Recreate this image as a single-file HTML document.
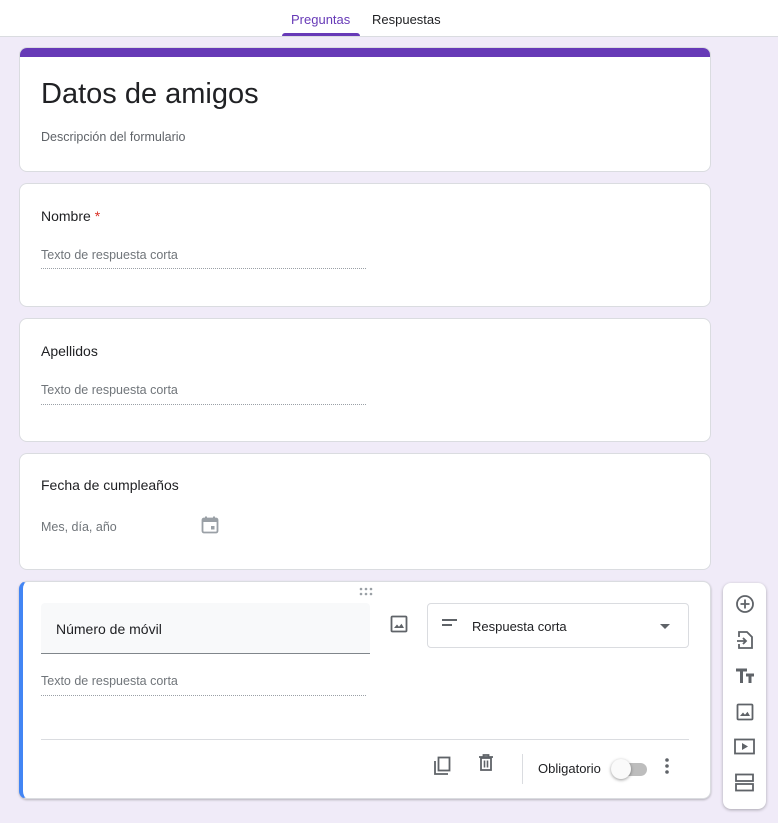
<!DOCTYPE html>
<html><head><meta charset="utf-8">
<style>
*{box-sizing:border-box;margin:0;padding:0}
body{width:778px;height:823px;overflow:hidden;background:#f0ebf8;font-family:"Liberation Sans",Arial,sans-serif;position:relative;color:#202124}
.abs{position:absolute}
.hdr{left:0;top:0;width:778px;height:37px;background:#fff;border-bottom:1px solid #dadce0}
.card{position:absolute;left:19px;width:692px;background:#fff;border:1px solid #dadce0;border-radius:8px}
.t{position:absolute;white-space:nowrap}
.ph{font-size:12.5px;color:#70757a}
.dot{position:absolute;height:0;border-bottom:1px dotted #9aa0a6}
svg{position:absolute}
</style></head><body>
<div class="abs hdr">
 <div class="t" style="left:291px;top:12px;font-size:13px;color:#673ab7">Preguntas</div>
 <div class="t" style="left:372px;top:12px;font-size:13px;color:#202124">Respuestas</div>
 <div class="abs" style="left:282px;top:33px;width:78px;height:3px;background:#673ab7;border-radius:3px 3px 0 0"></div>
</div>

<div class="card" style="top:47px;height:125px;overflow:hidden">
 <div class="abs" style="left:-1px;top:-1px;width:694px;height:10px;background:#673ab7"></div>
 <div class="t" style="left:21px;top:30px;font-size:29px;color:#202124">Datos de amigos</div>
 <div class="t" style="left:21px;top:82px;font-size:12.5px;color:#5f6368">Descripción del formulario</div>
</div>

<div class="card" style="top:183px;height:124px">
 <div class="t" style="left:21px;top:24px;font-size:14px">Nombre <span style="color:#d93025">*</span></div>
 <div class="t ph" style="left:21px;top:64px">Texto de respuesta corta</div>
 <div class="dot" style="left:21px;top:84px;width:325px"></div>
</div>

<div class="card" style="top:318px;height:124px">
 <div class="t" style="left:21px;top:24px;font-size:14px">Apellidos</div>
 <div class="t ph" style="left:21px;top:64px">Texto de respuesta corta</div>
 <div class="dot" style="left:21px;top:85px;width:325px"></div>
</div>

<div class="card" style="top:453px;height:117px">
 <div class="t" style="left:21px;top:23px;font-size:14px">Fecha de cumpleaños</div>
 <div class="t ph" style="left:21px;top:66px">Mes, día, año</div>
 <svg style="left:181px;top:62px" width="18" height="18" viewBox="0 0 18 18"><rect x="1.5" y="2.5" width="15" height="14" rx="1.5" fill="none" stroke="#9aa0a6" stroke-width="1.8"/><rect x="1.5" y="2.5" width="15" height="3.5" fill="#9aa0a6"/><rect x="4" y="0.5" width="2" height="3" fill="#9aa0a6"/><rect x="12" y="0.5" width="2" height="3" fill="#9aa0a6"/><rect x="10" y="10" width="3.5" height="3.5" fill="#9aa0a6"/></svg>
</div>

<div class="card" style="top:581px;height:218px;border-left:4px solid #4285f4;box-shadow:0 1px 2px rgba(0,0,0,.25)">
 <svg style="left:335px;top:5px" width="16" height="10"><g fill="#9aa0a6"><circle cx="3" cy="2" r="1.3"/><circle cx="8" cy="2" r="1.3"/><circle cx="13" cy="2" r="1.3"/><circle cx="3" cy="7" r="1.3"/><circle cx="8" cy="7" r="1.3"/><circle cx="13" cy="7" r="1.3"/></g></svg>
 <div class="abs" style="left:18px;top:21px;width:329px;height:51px;background:#f8f9fa;border-bottom:1px solid #80868b;border-radius:4px 4px 0 0"></div>
 <div class="t" style="left:33px;top:39px;font-size:14px">Número de móvil</div>
 <svg style="left:367px;top:33px" width="18" height="18" viewBox="0 0 18 18"><rect x="1.5" y="1.5" width="15" height="15" rx="1" fill="none" stroke="#5f6368" stroke-width="1.8"/><path d="M4 13l3-3.5 2 2.3 2.5-3 2.5 4.2z" fill="#5f6368"/></svg>
 <div class="abs" style="left:404px;top:21px;width:262px;height:45px;border:1px solid #dadce0;border-radius:4px"></div>
 <svg style="left:419px;top:37px" width="16" height="8"><rect x="0" y="0" width="15" height="2" fill="#5f6368"/><rect x="0" y="5" width="10" height="2" fill="#5f6368"/></svg>
 <div class="t" style="left:449px;top:37px;font-size:13px">Respuesta corta</div>
 <svg style="left:637px;top:42px" width="10" height="5"><path d="M0 0h10L5 5z" fill="#5f6368"/></svg>
 <div class="t ph" style="left:18px;top:92px">Texto de respuesta corta</div>
 <div class="dot" style="left:18px;top:113px;width:325px"></div>
 <div class="abs" style="left:18px;top:157px;width:648px;height:1px;background:#dadce0"></div>
 <svg style="left:409px;top:173px" width="22" height="22" viewBox="0 0 22 22"><path d="M3 6v13h13" fill="none" stroke="#5f6368" stroke-width="1.8"/><rect x="6.5" y="2.5" width="11" height="13" fill="none" stroke="#5f6368" stroke-width="1.8"/></svg>
 <svg style="left:455px;top:172px" width="16" height="18" viewBox="0 0 16 18"><path d="M1 3h14M5.5 3V1h5v2" fill="none" stroke="#5f6368" stroke-width="1.8"/><rect x="3" y="4" width="10" height="12" fill="none" stroke="#5f6368" stroke-width="1.8"/><path d="M6.5 6.5v7M9.5 6.5v7" stroke="#5f6368" stroke-width="1.6"/></svg>
 <div class="abs" style="left:499px;top:172px;width:1px;height:30px;background:#dadce0"></div>
 <div class="t" style="left:515px;top:179px;font-size:13px">Obligatorio</div>
 <div class="abs" style="left:593px;top:181px;width:31px;height:13px;background:#bdbdbd;border-radius:7px"></div>
 <div class="abs" style="left:588px;top:177px;width:20px;height:20px;background:#fafafa;border-radius:50%;box-shadow:0 1px 3px rgba(0,0,0,.4)"></div>
 <svg style="left:641px;top:175px" width="6" height="18"><g fill="#5f6368"><circle cx="3" cy="3" r="1.8"/><circle cx="3" cy="9" r="1.8"/><circle cx="3" cy="15" r="1.8"/></g></svg>
</div>

<div class="abs" style="left:723px;top:583px;width:43px;height:226px;background:#fff;border-radius:8px;box-shadow:0 1px 3px rgba(0,0,0,.3)">
 <svg style="left:12px;top:11px" width="20" height="20" viewBox="0 0 20 20"><circle cx="10" cy="10" r="8" fill="none" stroke="#5f6368" stroke-width="1.8"/><path d="M10 5.5v9M5.5 10h9" stroke="#5f6368" stroke-width="1.8"/></svg>
 <svg style="left:13px;top:47px" width="18" height="20" viewBox="0 0 18 20"><path d="M3 7V2h8l5 5v11H3v-4" fill="none" stroke="#5f6368" stroke-width="1.8"/><path d="M1 11h9M7 8l3 3-3 3" fill="none" stroke="#5f6368" stroke-width="1.8"/></svg>
 <svg style="left:12px;top:85px" width="20" height="16" viewBox="0 0 20 16"><path d="M1 2h11M6.5 2v13M11 7h8M15 7v8" stroke="#5f6368" stroke-width="3"/></svg>
 <svg style="left:13px;top:120px" width="18" height="18" viewBox="0 0 18 18"><rect x="1.5" y="1.5" width="15" height="15" rx="1" fill="none" stroke="#5f6368" stroke-width="1.8"/><path d="M4 13l3-3.5 2 2.3 2.5-3 2.5 4.2z" fill="#5f6368"/></svg>
 <svg style="left:11px;top:155px" width="21" height="17" viewBox="0 0 21 17"><rect x="1" y="1.5" width="19" height="14" fill="none" stroke="#5f6368" stroke-width="1.8"/><path d="M8 5v7l6-3.5z" fill="#5f6368"/></svg>
 <svg style="left:12px;top:190px" width="19" height="19" viewBox="0 0 19 19"><rect x="1" y="1.5" width="17" height="6.5" fill="none" stroke="#5f6368" stroke-width="1.8"/><rect x="1" y="11" width="17" height="6.5" fill="none" stroke="#5f6368" stroke-width="1.8"/></svg>
</div>
</body></html>
